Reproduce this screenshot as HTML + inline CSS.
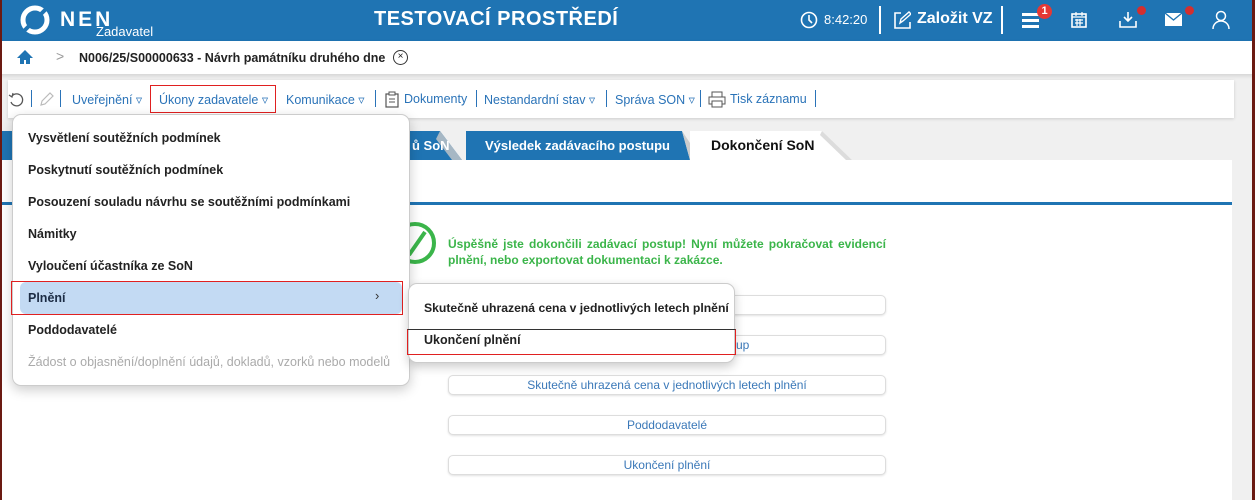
<!DOCTYPE html>
<html><head><meta charset="utf-8"><style>
*{margin:0;padding:0;box-sizing:border-box}
body{width:1255px;height:500px;overflow:hidden;background:#f0f0f0;font-family:"Liberation Sans",sans-serif;position:relative;font-size:13px;color:#222}
.abs{position:absolute}
.hdr{left:0;top:0;width:1255px;height:41px;background:#1f74b3;color:#fff}
.crumb{left:0;top:41px;width:1255px;height:33px;background:#fff;box-shadow:0 2px 4px rgba(0,0,0,.12)}
.tb{left:8px;top:80px;width:1226px;height:38px;background:#fff;box-shadow:0 1px 3px rgba(0,0,0,.15)}
.tbi{top:92px;font-size:12.5px;color:#2a73b8;white-space:nowrap}
.sep{top:90px;width:1px;height:17px;background:#2a73b8}
.panel{left:0;top:160px;width:1232px;height:340px;background:#fff}
.btn{left:448px;width:438px;height:20px;border:1px solid #ddd;border-radius:5px;box-shadow:0 1px 2px rgba(0,0,0,.12);background:#fff;color:#3a78b8;font-size:12px;text-align:center;line-height:18px}
.menu{left:12px;top:114px;width:398px;height:272px;background:#fff;border:1px solid #ccc;border-radius:9px;box-shadow:0 4px 12px rgba(0,0,0,.2)}
.mi{left:28px;font-size:12.5px;color:#222;font-weight:bold;white-space:nowrap}
</style></head><body>
<div class="abs" style="left:0;top:0;width:2px;height:500px;background:#6b1a12;z-index:9"></div>
<div class="abs" style="left:1252px;top:0;width:3px;height:500px;background:#6b1a12;z-index:9"></div>
<div class="abs" style="left:1232px;top:118px;width:20px;height:382px;background:#f0f0f0"></div>
<div class="abs hdr">
 <svg class="abs" style="left:18px;top:5px" width="34" height="30" viewBox="0 0 34 30"><circle cx="17" cy="15" r="12" fill="none" stroke="#fff" stroke-width="5"/><path d="M6 26 L28 4" stroke="#1f74b3" stroke-width="4"/></svg>
 <div class="abs" style="left:60px;top:8px;font-size:21px;font-weight:bold;letter-spacing:3px">NEN</div>
 <div class="abs" style="left:96px;top:24px;font-size:13px">Zadavatel</div>
 <div class="abs" style="left:374px;top:8px;font-size:20px;font-weight:bold;letter-spacing:.5px">TESTOVACÍ PROSTŘEDÍ</div>
 <svg class="abs" style="left:800px;top:11px" width="18" height="18"><circle cx="9" cy="9" r="7.5" fill="none" stroke="#fff" stroke-width="1.6"/><path d="M9 4v5l3 3" stroke="#fff" stroke-width="1.6" fill="none"/></svg>
 <div class="abs" style="left:824px;top:12px;font-size:13px">8:42:20</div>
 <div class="abs" style="left:879px;top:6px;width:2px;height:28px;background:#fff"></div>
 <svg class="abs" style="left:893px;top:11px" width="18" height="18"><path d="M8 2H2v15h15v-6" fill="none" stroke="#fff" stroke-width="1.6"/><path d="M7 12l1-4 8-7 2 2-8 7z" fill="none" stroke="#fff" stroke-width="1.4"/></svg>
 <div class="abs" style="left:917px;top:10px;font-size:16px;font-weight:bold">Založit VZ</div>
 <div class="abs" style="left:1001px;top:6px;width:2px;height:28px;background:#fff"></div>
 <div class="abs" style="left:1022px;top:13px;width:17px;height:3px;background:#fff;box-shadow:0 6px 0 #fff,0 12px 0 #fff"></div>
 <div class="abs" style="left:1037px;top:4px;width:15px;height:15px;border-radius:50%;background:#e53935;font-size:11px;text-align:center;line-height:15px;font-weight:bold">1</div>
 <svg class="abs" style="left:1070px;top:11px" width="18" height="18"><rect x="2" y="3" width="14" height="13" fill="none" stroke="#fff" stroke-width="1.6"/><path d="M2 6h14M6 1v4M12 1v4M5 9h8M5 12h8M7 8v7M10 8v7" stroke="#fff" stroke-width="1.2"/></svg>
 <svg class="abs" style="left:1118px;top:10px" width="20" height="20"><path d="M10 2v9M6 7l4 4 4-4M2 11v6h16v-6" fill="none" stroke="#fff" stroke-width="1.6"/></svg>
 <div class="abs" style="left:1137px;top:6px;width:9px;height:9px;border-radius:50%;background:#d32f2f"></div>
 <svg class="abs" style="left:1165px;top:13px" width="20" height="14"><rect x="0" y="0" width="17" height="13" fill="#fff"/><path d="M0 0l8.5 7L17 0" stroke="#1f74b3" stroke-width="1.3" fill="none"/></svg>
 <div class="abs" style="left:1185px;top:6px;width:9px;height:9px;border-radius:50%;background:#d32f2f"></div>
 <svg class="abs" style="left:1212px;top:10px" width="18" height="20"><circle cx="9" cy="6" r="4.5" fill="none" stroke="#fff" stroke-width="1.5"/><path d="M1 19c0-5 4-8 8-8s8 3 8 8" fill="none" stroke="#fff" stroke-width="1.5"/></svg>
</div>
<div class="abs crumb">
 <svg class="abs" style="left:16px;top:8px" width="18" height="16"><path d="M9 1L1 9h3v6h4v-4h2v4h4V9h3z" fill="#1f74b3"/></svg>
 <div class="abs" style="left:56px;top:7px;color:#999;font-size:14px">&gt;</div>
 <div class="abs" style="left:79px;top:10px;font-size:12.5px;font-weight:bold">N006/25/S00000633 - Návrh památníku druhého dne</div>
 <div class="abs" style="left:393px;top:9px;width:15px;height:15px;border:1px solid #333;border-radius:50%;font-size:10px;text-align:center;line-height:12px">×</div>
</div>
<div class="abs tb"></div>
<svg class="abs" style="left:8px;top:92px" width="16" height="16"><path d="M4 4A6 6 0 1 1 3 10" fill="none" stroke="#555" stroke-width="1.3"/><path d="M1 3l3 2 1-4" fill="none" stroke="#555" stroke-width="1.2"/></svg>
<div class="abs sep" style="left:31px"></div>
<svg class="abs" style="left:39px;top:91px" width="16" height="16"><path d="M2 14l1-4 8-8 3 3-8 8z" fill="none" stroke="#bbb" stroke-width="1.2"/></svg>
<div class="abs sep" style="left:60px"></div>
<div class="abs tbi" style="left:72px">Uveřejnění ▿</div>
<div class="abs" style="left:150px;top:85px;width:126px;height:28px;border:1px solid #e02020"></div>
<div class="abs tbi" style="left:159px">Úkony zadavatele ▿</div>
<div class="abs tbi" style="left:286px">Komunikace ▿</div>
<div class="abs sep" style="left:375px"></div>
<svg class="abs" style="left:384px;top:91px" width="16" height="17"><rect x="2" y="3" width="12" height="13" fill="none" stroke="#555" stroke-width="1.2"/><rect x="5" y="1" width="6" height="3" fill="#fff" stroke="#555"/><path d="M5 8h6M5 11h6" stroke="#555"/></svg>
<div class="abs tbi" style="left:404px">Dokumenty</div>
<div class="abs sep" style="left:476px"></div>
<div class="abs tbi" style="left:484px">Nestandardní stav ▿</div>
<div class="abs sep" style="left:606px"></div>
<div class="abs tbi" style="left:615px">Správa SON ▿</div>
<div class="abs sep" style="left:700px"></div>
<svg class="abs" style="left:708px;top:91px" width="18" height="17"><rect x="4" y="1" width="10" height="5" fill="none" stroke="#555"/><rect x="1" y="6" width="16" height="7" fill="none" stroke="#555"/><rect x="4" y="10" width="10" height="6" fill="#fff" stroke="#555"/></svg>
<div class="abs tbi" style="left:730px">Tisk záznamu</div>
<div class="abs sep" style="left:815px"></div>

<!-- tabs -->
<svg class="abs" style="left:0;top:131px" width="860" height="30">
 <path d="M0 0H440L462 29H0Z" fill="#1f74b3"/>
 <path d="M440 0L462 29H452L436 8Z" fill="#c8c8c8" opacity=".8"/>
 <path d="M466 0H682L690 29H466Z" fill="#1f74b3"/>
 <path d="M682 0L694 18V29L690 29Z" fill="#ccc"/>
 <path d="M690 0H822L852 29H690Z" fill="#fff"/>
 <path d="M822 0L852 29H846L820 4Z" fill="#dcdcdc"/>
</svg>
<div class="abs" style="left:412px;top:138px;color:#fff;font-weight:bold;font-size:13px">ů SoN</div>
<div class="abs" style="left:485px;top:138px;color:#fff;font-weight:bold;font-size:13px">Výsledek zadávacího postupu</div>
<div class="abs" style="left:711px;top:137px;font-weight:bold;font-size:14px;color:#111">Dokončení SoN</div>

<div class="abs panel"></div>
<div class="abs" style="left:0;top:202px;width:1232px;height:3px;background:#1f74b3"></div>
<svg class="abs" style="left:395px;top:220px" width="50" height="50"><circle cx="20" cy="23" r="19" fill="none" stroke="#3bb54a" stroke-width="4"/><path d="M14 35L30 12" stroke="#3bb54a" stroke-width="4"/></svg>
<div class="abs" style="left:448px;top:236px;width:438px;color:#3bb54a;font-weight:bold;font-size:12px;line-height:16px;text-align:justify;text-align-last:left">Úspěšně jste dokončili zadávací postup! Nyní můžete pokračovat evidencí plnění, nebo exportovat dokumentaci k zakázce.</div>
<div class="abs btn" style="top:295px"></div>
<div class="abs btn" style="top:335px"></div>
<div class="abs" style="left:736px;top:338px;color:#3a78b8;font-size:12px">up</div>
<div class="abs btn" style="top:375px">Skutečně uhrazená cena v jednotlivých letech plnění</div>
<div class="abs btn" style="top:415px">Poddodavatelé</div>
<div class="abs btn" style="top:455px">Ukončení plnění</div>

<!-- menu -->
<div class="abs menu"></div>
<div class="abs mi" style="top:131px">Vysvětlení soutěžních podmínek</div>
<div class="abs mi" style="top:163px">Poskytnutí soutěžních podmínek</div>
<div class="abs mi" style="top:195px">Posouzení souladu návrhu se soutěžními podmínkami</div>
<div class="abs mi" style="top:227px">Námitky</div>
<div class="abs mi" style="top:259px">Vyloučení účastníka ze SoN</div>
<div class="abs" style="left:20px;top:282px;width:382px;height:32px;background:#c3daf3;border-radius:6px"></div>
<div class="abs" style="left:11px;top:281px;width:392px;height:34px;border:1px solid #e02020"></div>
<div class="abs mi" style="top:291px;color:#1c2c44">Plnění</div>
<div class="abs" style="left:375px;top:288px;font-size:13px;color:#333">›</div>
<div class="abs mi" style="top:323px">Poddodavatelé</div>
<div class="abs mi" style="top:355px;color:#aaa;font-weight:normal">Žádost o objasnění/doplnění údajů, dokladů, vzorků nebo modelů</div>

<div class="abs" style="left:408px;top:283px;width:327px;height:80px;background:#fff;border:1px solid #ccc;border-radius:9px;box-shadow:0 4px 10px rgba(0,0,0,.2)"></div>
<div class="abs" style="left:424px;top:301px;font-size:12.2px;font-weight:bold;white-space:nowrap">Skutečně uhrazená cena v jednotlivých letech plnění</div>
<div class="abs" style="left:407px;top:329px;width:329px;height:26px;border:1px solid #e02020;border-top:1px solid #333"></div>
<div class="abs" style="left:424px;top:333px;font-size:12.5px;font-weight:bold">Ukončení plnění</div>
</body></html>
